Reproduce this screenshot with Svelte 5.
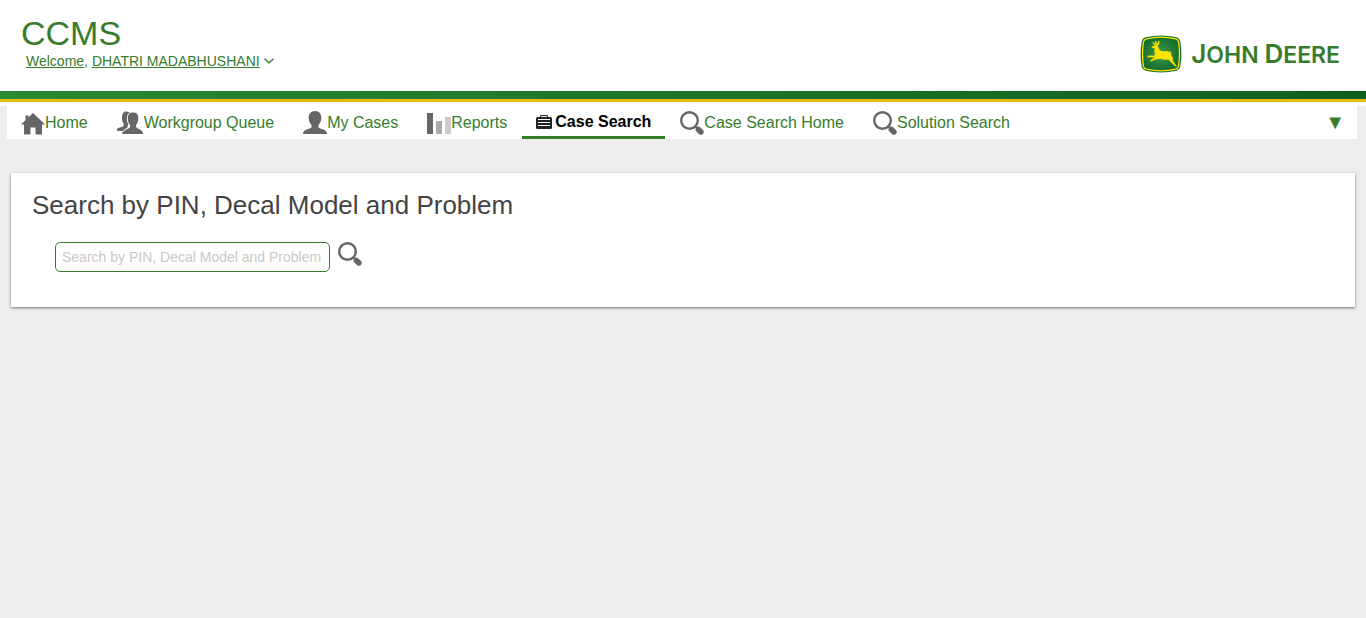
<script>
  const tabs = [
    { label: 'Home', icon: 'home' },
    { label: 'Workgroup Queue', icon: 'group' },
    { label: 'My Cases', icon: 'person' },
    { label: 'Reports', icon: 'bars' },
    { label: 'Case Search', icon: 'case', active: true },
    { label: 'Case Search Home', icon: 'search' },
    { label: 'Solution Search', icon: 'search' }
  ];
  let query = $state('');
</script>

{#snippet magnifier()}
  <svg width="24" height="24" viewBox="0 0 24 24" aria-hidden="true">
    <circle cx="9.5" cy="9.5" r="8.3" fill="none" stroke="#666" stroke-width="2.4" />
    <path d="M15 15l2.5 2.5" stroke="#666" stroke-width="2" />
    <path d="M18.4 18.4l2.5 2.5" stroke="#666" stroke-width="5.600" stroke-linecap="round" />
  </svg>
{/snippet}

<header>
  <div class="brand">
    <h1>CCMS</h1>
    <button class="user" type="button">
      <span class="link">Welcome,</span>&nbsp;<span class="link">DHATRI MADABHUSHANI</span>
      <svg width="10" height="6" viewBox="0 0 10 6" aria-hidden="true">
        <path d="M.5.7L5 4.8 9.5.7" fill="none" stroke="#367c2b" stroke-width="1.3" />
      </svg>
    </button>
  </div>
  <a class="logo" href="#home">
    <svg width="42" height="38" viewBox="0 0 42 38" aria-hidden="true">
      <defs>
        <radialGradient id="shield">
          <stop offset="0" stop-color="#43964a" />
          <stop offset="1" stop-color="#16702f" />
        </radialGradient>
      </defs>
      <path d="M5.500 2.200Q21-1.400 36.500 2.200 39.500 3 40.200 6 42.600 19 40.200 32 39.500 35 36.500 35.800 21 39.400 5.500 35.800 2.500 35 1.800 32-.6 19 1.800 6 2.500 3 5.500 2.200Z" fill="#16702f" />
      <path d="M6.300 3.800Q21 .5 35.700 3.800 38 4.500 38.500 6.700 40.500 19 38.500 31.300 38 33.500 35.700 34.200 21 37.500 6.300 34.200 4 33.500 3.500 31.300 1.500 19 3.500 6.700 4 4.500 6.300 3.800Z" fill="url(#shield)" stroke="#fde300" stroke-width="1.300" />
      <path d="M12 11.500L14.600 10.700 15.800 9.900 14 9.400 12.700 7.500 13.400 7.300 14.600 8.700 15.700 8.800 15.200 6.200 16 6.300 16.700 8.800 18 8.600 18.400 6 19.200 6.100 19 9.200 17.500 10.500 18.200 12.500 19.700 15.500 22.500 16.500 27.500 16.300 29.500 17.800 29.600 16 30.800 16.900 31 20 32.800 23.200 32.200 25 34 27.800 36.500 31.200 35.200 31.100 31.200 27.200 28.800 24.400 24.500 24.400 20.500 23.600 15.500 24.200 11.400 26.300 10.400 25.700 13.700 23.300 16 22.500 14 22.300 9.700 21.900 8 22.400 7.400 21.700 9.200 20.800 13.700 20.900 15.200 19.800 14.600 16 15.200 13.300 13.200 13 11.800 12.300Z" fill="#fde300" stroke="#fde300" stroke-width=".5" />
    </svg>
    <span class="wordmark"><b>J</b>OHN <b>D</b>EERE</span>
  </a>
</header>
<div class="stripe"></div>

<nav aria-label="Main">
  {#each tabs as tab}
    <a href="#tab" class:active={tab.active} aria-current={tab.active ? 'page' : undefined}>
      {#if tab.icon === 'home'}
        <svg width="24" height="24" viewBox="0 0 24 24" aria-hidden="true">
          <path d="M12 2L24 13.500H21V23.500H14.500V16.500H9.500V23.500H3V13.500H0L4.500 9.200V4.500H7.500V6.300Z" fill="#666" />
        </svg>
      {:else if tab.icon === 'group'}
        <svg width="27" height="24" viewBox="1 0 27 24" aria-hidden="true">
          <path d="M8 1C11 0 14 .8 15 3.500L13 5V12L11 17 7 20H.5C.6 17.500 2 16.800 5.500 16 8 15.300 8.200 14 7.200 12 5.500 9.500 5.200 3.500 8 1Z" fill="#666" />
          <path d="M17 1C21 1 23 3.500 22.800 8 22.600 11 21.500 12.500 20.600 14V16.200C22 18 27.500 17.800 27.700 23.500H5.500C5.700 18.500 12 18 13.500 16.200V14C12.200 12.500 11.600 11 11.400 8 11.200 3.500 13 1 17 1Z" fill="#666" stroke="#fff" stroke-width="1" />
        </svg>
      {:else if tab.icon === 'person'}
        <svg width="24" height="24" viewBox="0 0 24 24" aria-hidden="true">
          <path d="M12 0C16.500 0 18.500 3 18.300 7.500 18.100 10.500 17 12.500 15.500 14V16.200C17 18.500 24 17.500 24 23H0C0 17.500 7 18.500 8.500 16.200V14C7 12.500 5.900 10.500 5.700 7.500 5.500 3 7.500 0 12 0Z" fill="#666" />
        </svg>
      {:else if tab.icon === 'bars'}
        <svg width="24" height="24" viewBox="0 0 24 24" aria-hidden="true">
          <path d="M0 2h6v21H0z" fill="#666" />
          <path d="M9 10h6v13H9z" fill="#aaa" />
          <path d="M18 6h6v17h-6z" fill="#ccc" />
        </svg>
      {:else if tab.icon === 'case'}
        <svg class="case" width="16" height="24" viewBox="0 0 16 24" aria-hidden="true">
          <path d="M4.500 7V5.500H11.500V7" fill="none" stroke="#222" stroke-width="1" />
          <rect x="0" y="7" width="16" height="12" rx="1.500" fill="#222" />
          <path d="M2 9.500h12M2 12.500h12M2 15.500h12" stroke="#fff" stroke-width="1" />
        </svg>
      {:else}
        {@render magnifier()}
      {/if}
      <span>{tab.label}</span>
    </a>
  {/each}
  <button class="more" type="button" aria-label="More tabs">▼</button>
</nav>

<main>
  <section>
    <h2>Search by PIN, Decal Model and Problem</h2>
    <form onsubmit={(e) => e.preventDefault()}>
      <input
        type="text"
        bind:value={query}
        aria-label="Search by PIN, Decal Model and Problem"
        placeholder="Search by PIN, Decal Model and Problem"
      />
      <button class="go" type="submit" aria-label="Search">{@render magnifier()}</button>
    </form>
  </section>
</main>

<style>
  :global(body) {
    margin: 0;
    background: #ededed;
    font-family: "Liberation Sans", Arial, sans-serif;
    color: #367c2b;
  }
  svg {
    display: block;
    flex: none;
  }
  button {
    border: 0;
    padding: 0;
    background: none;
    font: inherit;
    color: inherit;
    cursor: pointer;
  }
  header {
    display: flex;
    justify-content: space-between;
    align-items: flex-start;
    padding: 13px 26px 18px 21px;
    background: #fff;
  }
  h1 {
    margin: 0;
    font-size: 34px;
    line-height: 40px;
    font-weight: 400;
  }
  .user {
    display: flex;
    align-items: center;
    margin-left: 5px;
    font-size: 14px;
    line-height: 16px;
  }
  .link {
    text-decoration: underline;
  }
  .user svg {
    margin-left: 4px;
  }
  .logo {
    display: flex;
    align-items: center;
    gap: 9px;
    margin-top: 22px;
    color: #367c2b;
    text-decoration: none;
  }
  .wordmark {
    font-family: Inter, sans-serif;
    font-size: 23px;
    line-height: 24px;
    font-weight: 600;
    white-space: nowrap;
  }
  .wordmark b {
    font-size: 26px;
    font-weight: 600;
  }
  .stripe {
    height: 8px;
    border-bottom: 3px solid #e8bb00;
    background: linear-gradient(90deg, #288a31, #0f5f20);
  }
  nav {
    display: flex;
    gap: 1px;
    border: solid #ededed;
    border-width: 0 9px 0 7px;
    background: #fff;
    box-shadow: 0 -4px #fff;
    margin-top: 4px;
    height: 33px;
  }
  nav a {
    display: flex;
    align-items: center;
    padding: 1px 14px 0;
    color: #367c2b;
    font-size: 16px;
    line-height: 24px;
    text-decoration: none;
    white-space: nowrap;
  }
  nav a.active {
    padding-top: 2px;
    border-bottom: 3px solid #367c2b;
    color: #000;
    font-weight: 700;
  }
  .case {
    margin-right: 3px;
  }
  .more {
    margin-left: auto;
    padding: 0 12px 2px;
    font-size: 20px;
    line-height: 24px;
  }
  main {
    padding: 34px 11px;
  }
  section {
    padding: 17px 21px 35px;
    border-radius: 1px;
    background: #fff;
    box-shadow: 0 1px 3px rgba(0, 0, 0, 0.5);
  }
  h2 {
    margin: 0;
    color: #444;
    font-size: 26px;
    line-height: 30px;
    font-weight: 400;
  }
  form {
    display: flex;
    align-items: flex-start;
    gap: 8px;
    margin: 22px 0 0 23px;
  }
  input {
    box-sizing: border-box;
    width: 275px;
    height: 30px;
    padding: 0 6px;
    border: 1px solid #367c2b;
    border-radius: 5px;
    background: #fff;
    font: 14px "Liberation Sans", Arial, sans-serif;
    color: #444;
  }
  input::placeholder {
    color: #c8c8c8;
  }
</style>
